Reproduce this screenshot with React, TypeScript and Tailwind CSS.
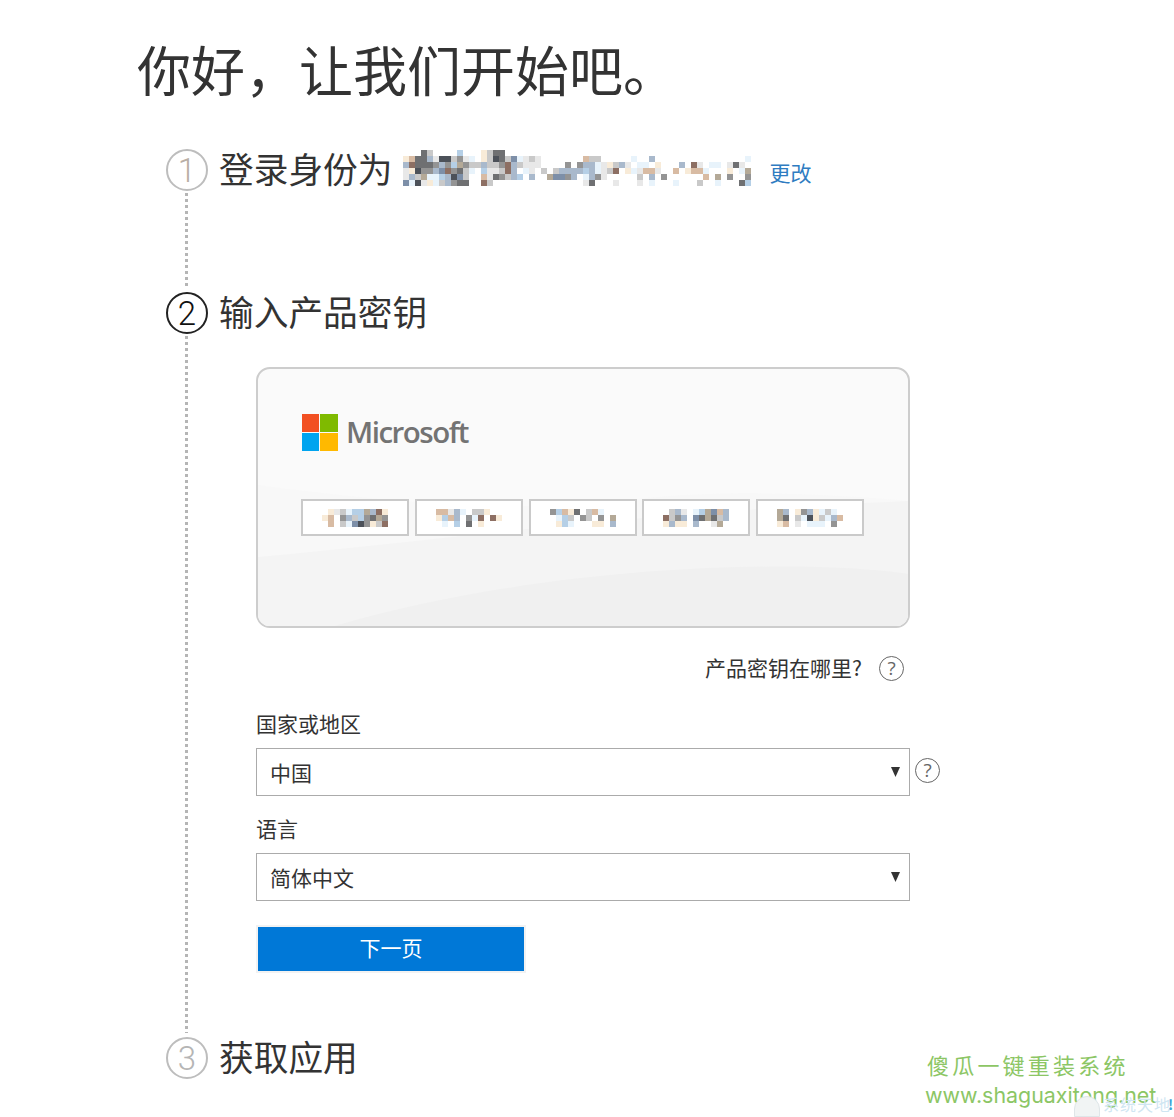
import type { ReactNode } from 'react';

const CJK = "font-['Noto_Sans_CJK_SC','Liberation_Sans',sans-serif]";

// Colours of the pixelated (censored) blocks
const palette: Record<string, string> = {
  a: '#6f7072',
  b: '#949494',
  c: '#c9c9c9',
  d: '#e8e8e8',
  e: '#f8ebd8',
  f: '#d8bba3',
  g: '#a9b9cc',
  h: '#b5cfe6',
  i: '#e8f3fb',
  j: '#8d6f63',
  k: '#4c5159',
  l: '#b4a997',
  m: '#7d8fa8',
};

const nameRows = [
  '...ac....h...ecaa............' + '.............................',
  'efaagdkkcbdi.eckacmidcd......' + '.fcc.....i..g...............i',
  'gjaaabgbhlbccgccbjgcddd....b.' + 'bggidecgd.ii.e...g.jd.ii.dad.',
  'dekbbgmjbaci.hddcjg.id.c.cggg' + 'ghgidcj.eidffd..f.effi...e.il',
  'dgcliihgkmc..fdabcgh.g..lmmbg' + '.igbd.....c.g.b......f.l.b..b',
  'mikdeicgbaa..jc..............' + '.da...d...d.i...i...c..i...ah',
];

const keyRows = [
  ['.edcihhlgje', 'ef.bgchbalb', '.f.cimkbecj'],
  ['ffdgi.cce..', 'ehfg.bij.je', '.i.h.a.e...'],
  ['bhfea.cfi..', '.ihc.bc.b.l', '.ehi...ee.g'],
  ['.cgd.ihlmfg', 'jcbg.malacg', 'egee.g..dl.'],
  ['lg.ebgeici.', 'la.cikecigf', 'ef.d.iii.b.'],
];

function PixelBlock({ rows, cell = 6 }: { rows: string[]; cell?: number }) {
  const cols = Math.max(...rows.map((r) => r.length));
  return (
    <svg width={cols * cell} height={rows.length * cell} className="block shrink-0">
      {rows.map((row, y) =>
        row.split('').map((ch, x) =>
          palette[ch] ? (
            <rect key={`${x}-${y}`} x={x * cell} y={y * cell} width={cell} height={cell} fill={palette[ch]} />
          ) : null,
        ),
      )}
    </svg>
  );
}

function DottedLine() {
  return (
    <div className="flex-1 w-[3px] mt-[2px] mb-[4px] mr-[2px] bg-[repeating-linear-gradient(to_bottom,#b5b5b5_0,#b5b5b5_3px,transparent_3px,transparent_6px)]" />
  );
}

function StepCircle({ n, className }: { n: number; className: string }) {
  return (
    <div
      className={`w-[42px] h-[42px] shrink-0 rounded-full border-2 flex items-center justify-center font-['Roboto',sans-serif] font-light text-[33px] leading-none ${className}`}
    >
      {n}
    </div>
  );
}

function StepTitle({ children }: { children: ReactNode }) {
  return (
    <h2 className="h-[42px] pb-[3px] flex items-center text-[34.7px] font-normal leading-none text-[#333]">
      {children}
    </h2>
  );
}

function HelpIcon() {
  return (
    <div className="w-[25px] h-[25px] shrink-0 rounded-full border border-[#666] flex items-center justify-center font-['Open_Sans',sans-serif] font-normal text-[19px] leading-none text-[#666]">
      ?
    </div>
  );
}

function SelectBox({ value }: { value: string }) {
  return (
    <div className="w-[654px] h-[48px] shrink-0 border border-[#ababab] bg-white flex items-center justify-between pl-[13px] pr-[9px] text-[21px] text-[#333]">
      <span className="pt-[2px]">{value}</span>
      <svg width="9" height="10" viewBox="0 0 9 10">
        <path d="M0 0h9L4.5 10z" fill="#333" />
      </svg>
    </div>
  );
}

function MicrosoftLogo() {
  return (
    <div className="flex items-center">
      <svg width="36" height="37" viewBox="0 0 36 37" className="shrink-0">
        <rect x="0" y="0" width="17" height="18" fill="#f25022" />
        <rect x="18" y="0" width="18" height="18" fill="#7fba00" />
        <rect x="0" y="19" width="17" height="18" fill="#00a4ef" />
        <rect x="18" y="19" width="18" height="18" fill="#ffb900" />
      </svg>
      <span className="ml-[8px] -mt-[2px] font-['Open_Sans',sans-serif] font-semibold text-[29.5px] leading-none tracking-[-1.5px] text-[#737373]">
        Microsoft
      </span>
    </div>
  );
}

function KeyCard() {
  return (
    <div className="relative w-[654px] h-[261px] rounded-[14px] border-2 border-[#cdcdcd] bg-[#fafafa] overflow-hidden">
      {/* Background swooshes */}
      <svg width="652" height="259" viewBox="0 0 652 259" className="absolute left-0 top-0">
        <path d="M0 116C120 132 260 146 380 130C470 120 580 125 652 132V259H0Z" fill="#f8f8f8" />
        <path d="M0 188C200 170 350 145 652 132V259H0Z" fill="#f4f4f4" />
        <path d="M70 259C250 205 450 195 560 198C600 199 630 202 652 205V259Z" fill="#f0f0f0" />
      </svg>

      <div className="relative pl-[44px] pt-[45px]">
        <MicrosoftLogo />
        <div className="flex gap-[6px] mt-[48px] -ml-[1px]">
          {keyRows.map((rows, i) => (
            <div
              key={i}
              className={`w-[108px] h-[37px] border-2 border-[#cacaca] bg-white flex items-center justify-center ${
                i === 3 ? '-ml-[1px]' : ''
              }`}
            >
              <PixelBlock rows={rows} />
            </div>
          ))}
        </div>
      </div>
    </div>
  );
}

function Watermark() {
  return (
    <div className="absolute left-[925px] top-[1050px] w-[249px] h-[67px]">
      <div className={`${CJK} ml-[2px] text-[22px] leading-[28px] font-normal tracking-[3.2px] text-[#8cc665]`}>
        傻瓜一键重装系统
      </div>
      <div className="font-['Inter',sans-serif] text-[21.4px] leading-[30px] mt-[2px] whitespace-nowrap text-[#8cc665]">
        www.shaguaxitong.net
      </div>
      <div className="absolute left-[149px] top-[46px] w-[26px] h-[21px] rounded-t-full bg-[#f1f4f4] border border-[#dfe6e8]" />
      <div className={`${CJK} absolute left-[178px] top-[44px] text-[16px] leading-[20px] tracking-[1px] whitespace-nowrap text-[#cfe6f2]`}>
        系统天地
      </div>
      <span className="absolute left-[243px] top-[44px] text-[14px] leading-[20px] font-bold text-[#3aa5d8]">!</span>
    </div>
  );
}

export default function App() {
  return (
    <div className={`${CJK} relative w-[1174px] h-[1117px] overflow-hidden bg-white pl-[137px]`}>
      <h1 className="h-[138px] flex items-center text-[54px] font-normal leading-none text-[#333]">
        你好，让我们开始吧。
      </h1>

      <div className="ml-[29px] mt-[11px]">
        {/* Step 1 */}
        <section className="flex h-[143px]">
          <div className="w-[42px] flex flex-col items-center">
            <StepCircle n={1} className="border-[#bdbdbd] text-[#b9aea5]" />
            <DottedLine />
          </div>
          <div className="ml-[11px] flex items-start">
            <StepTitle>登录身份为</StepTitle>
            <div className="ml-[11px] mt-[1px]">
              <PixelBlock rows={nameRows} />
            </div>
            <a className="ml-[18px] mt-[8px] text-[21px] leading-[30px] text-[#2f7cc1]">更改</a>
          </div>
        </section>

        {/* Step 2 */}
        <section className="flex h-[745px]">
          <div className="w-[42px] flex flex-col items-center">
            <StepCircle n={2} className="border-[#222] text-[#111]" />
            <DottedLine />
          </div>
          <div className="ml-[11px]">
            <StepTitle>输入产品密钥</StepTitle>
            <div className="ml-[37px] mt-[33px]">
              <KeyCard />

              <div className="w-[654px] h-[24px] mt-[28px] pr-[6px] flex items-center justify-end text-[21px] text-[#333]">
                产品密钥在哪里?
                <span className="ml-[17px]">
                  <HelpIcon />
                </span>
              </div>

              <label className="block h-[30px] mt-[28px] text-[21px] leading-[30px] text-[#333]">国家或地区</label>
              <div className="flex items-center mt-[10px]">
                <SelectBox value="中国" />
                <span className="ml-[5px] -mt-[4px]">
                  <HelpIcon />
                </span>
              </div>

              <label className="block h-[30px] mt-[17px] text-[21px] leading-[30px] text-[#333]">语言</label>
              <div className="mt-[10px]">
                <SelectBox value="简体中文" />
              </div>

              <button className="block w-[270px] h-[48px] mt-[24px] pb-[2px] border-2 border-[#f2f2f2] bg-[#0078d7] text-[21px] text-white">
                下一页
              </button>
            </div>
          </div>
        </section>

        {/* Step 3 */}
        <section className="flex">
          <div className="w-[42px] flex flex-col items-center">
            <StepCircle n={3} className="border-[#bdbdbd] text-[#b5b5b5]" />
          </div>
          <div className="ml-[11px]">
            <StepTitle>获取应用</StepTitle>
          </div>
        </section>
      </div>

      <Watermark />
    </div>
  );
}
